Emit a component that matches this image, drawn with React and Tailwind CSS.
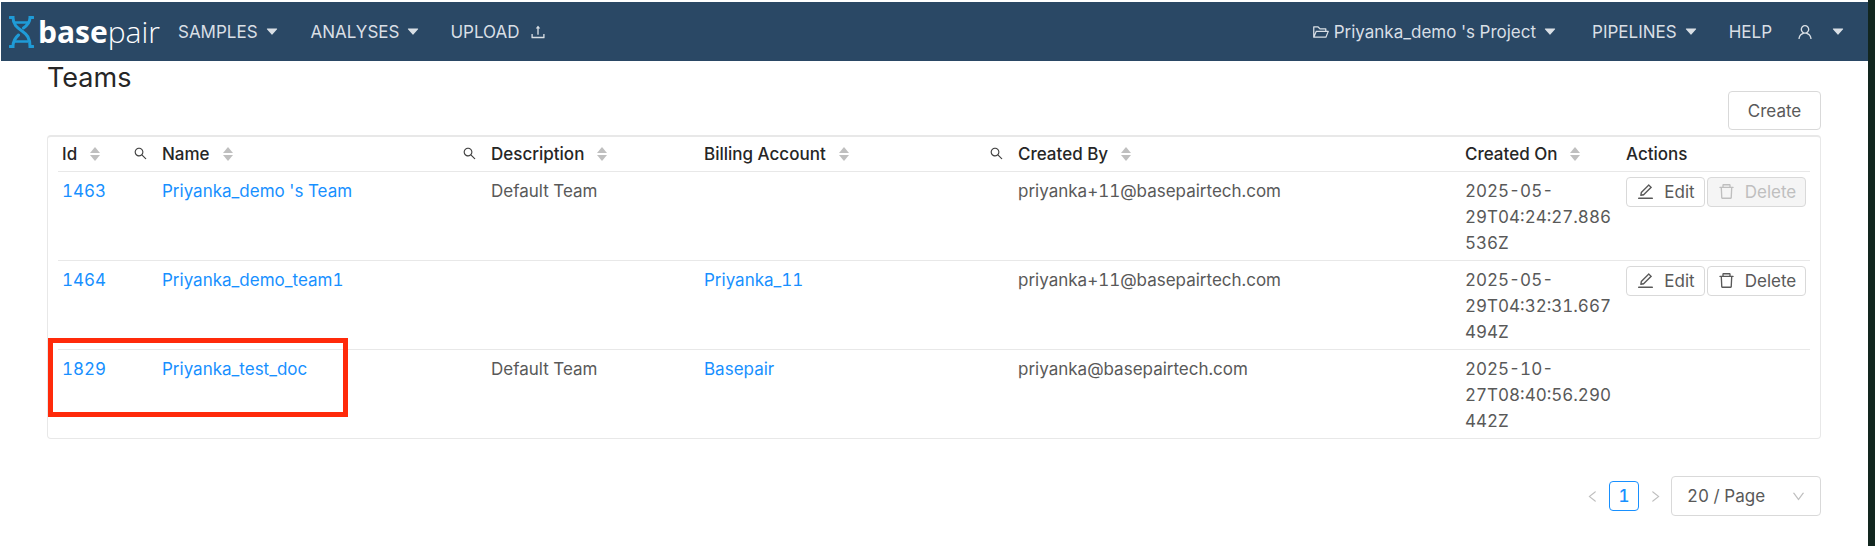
import {
  AiOutlineEdit,
  AiOutlineDelete,
  AiOutlineUpload,
  AiOutlineUser,
  AiOutlineFolderOpen,
  AiOutlineSearch,
  AiOutlineLeft,
  AiOutlineRight,
  AiOutlineDown,
} from "react-icons/ai";

const teams = [
  {
    id: 1463,
    name: "Priyanka_demo 's Team",
    description: "Default Team",
    billing: "",
    createdBy: "priyanka+11@basepairtech.com",
    createdOn: "2025-05-29T04:24:27.886536Z",
    deletable: false,
    actions: true,
  },
  {
    id: 1464,
    name: "Priyanka_demo_team1",
    description: "",
    billing: "Priyanka_11",
    createdBy: "priyanka+11@basepairtech.com",
    createdOn: "2025-05-29T04:32:31.667494Z",
    deletable: true,
    actions: true,
  },
  {
    id: 1829,
    name: "Priyanka_test_doc",
    description: "Default Team",
    billing: "Basepair",
    createdBy: "priyanka@basepairtech.com",
    createdOn: "2025-10-27T08:40:56.290442Z",
    actions: false,
  },
];

function Caret({ className = "" }) {
  return (
    <svg viewBox="0 0 12 8" className={`h-[7px] w-[12px] fill-current ${className}`}>
      <path d="M0.6 0.5h10.8a.5.5 0 0 1 .4.8L6.4 7.4a.5.5 0 0 1-.8 0L.2 1.3a.5.5 0 0 1 .4-.8z" />
    </svg>
  );
}

function SortCarets() {
  return (
    <span className="flex flex-col gap-[2px] text-[#bfbfbf]">
      <svg viewBox="0 0 10 6" className="h-[6px] w-[10px] fill-current">
        <path d="M5 0l5 6H0z" />
      </svg>
      <svg viewBox="0 0 10 6" className="h-[6px] w-[10px] fill-current">
        <path d="M0 0h10L5 6z" />
      </svg>
    </span>
  );
}

function Logo() {
  return (
    <div className="flex items-center">
      <svg viewBox="0 0 25 32" className="h-[32px] w-[25px] fill-none stroke-[#1f9bd7]" strokeWidth="3">
        <path d="M1 1.5h3c0 7 4 10 9 13.5 5 3.500 8 7 8 15.500h3" strokeLinecap="round" />
        <path d="M24 1.500h-3c0 5-3 8-6.500 10.500" strokeLinecap="round" />
        <path d="M9.500 19c-3 2.500-5.500 6-5.500 11.500h-3" strokeLinecap="round" />
        <path d="M6 6.500h13" strokeWidth="2.500" />
        <path d="M6 25.500h13" strokeWidth="2.500" />
      </svg>
      <span className="ml-[4px] font-['Open_Sans',sans-serif] text-[30px] leading-none text-white">
        <span className="font-bold">base</span>
        <span className="font-light">pair</span>
      </span>
    </div>
  );
}

function NavItem({ children, caret = true, className = "" }) {
  return (
    <span className={`flex items-center text-[17px] text-[#d9dfe5] ${className}`}>
      {children}
      {caret && <Caret className="ml-[8px]" />}
    </span>
  );
}

function Navbar() {
  return (
    <nav className="ml-px mt-[2px] flex h-[59px] items-center bg-[#2a4865] pl-[8px] pr-[24px]">
      <Logo />
      <NavItem className="ml-[18px]">SAMPLES</NavItem>
      <NavItem className="ml-[33px]">ANALYSES</NavItem>
      <NavItem caret={false} className="ml-[31px]">
        UPLOAD
        <AiOutlineUpload className="ml-[9px]" size={18} />
      </NavItem>
      <div className="ml-auto flex items-center">
        <NavItem>
          <AiOutlineFolderOpen className="mr-[4px]" size={18} />
          Priyanka_demo 's Project
        </NavItem>
        <NavItem className="ml-[36px]">PIPELINES</NavItem>
        <NavItem caret={false} className="ml-[32px]">
          HELP
        </NavItem>
        <NavItem caret={false} className="ml-[24px]">
          <AiOutlineUser size={18} />
          <Caret className="ml-[18px]" />
        </NavItem>
      </div>
    </nav>
  );
}

function HeaderCell({ label, sortable = true, search = false }) {
  return (
    <th className="px-[4px] text-left align-middle font-medium text-[#262626]">
      <div className="flex items-center justify-between">
        <span className="flex items-center gap-[13px]">
          {label}
          {sortable && <SortCarets />}
        </span>
        {search && <AiOutlineSearch className="mr-[6px] text-[#404040]" size={15} />}
      </div>
    </th>
  );
}

function ActionButton({ icon: Icon, label, disabled, className = "" }) {
  return (
    <button
      type="button"
      disabled={disabled}
      className={`flex h-[30px] items-center justify-center gap-[9px] rounded border border-[#d9d9d9] ${
        disabled ? "bg-[#f5f5f5] text-[#bfbfbf]" : "bg-white text-[#595959]"
      } ${className}`}
    >
      <Icon size={19} />
      {label}
    </button>
  );
}

function TeamsTable() {
  return (
    <div className="relative mt-[5px] rounded border border-t-2 border-[#e8e8e8] px-[10px]">
      <table className="w-full table-fixed border-collapse">
        <colgroup>
          <col className="w-[100px]" />
          <col className="w-[329px]" />
          <col className="w-[213px]" />
          <col className="w-[314px]" />
          <col className="w-[447px]" />
          <col className="w-[161px]" />
          <col className="w-[188px]" />
        </colgroup>
        <thead>
          <tr className="h-[34px]">
            <HeaderCell label="Id" search />
            <HeaderCell label="Name" search />
            <HeaderCell label="Description" />
            <HeaderCell label="Billing Account" search />
            <HeaderCell label="Created By" />
            <HeaderCell label="Created On" />
            <HeaderCell label="Actions" sortable={false} />
          </tr>
        </thead>
        <tbody>
          {teams.map((team) => (
            <tr key={team.id} className="h-[89px] border-t border-[#e8e8e8] align-top">
              <td className="px-[4px] pb-[4px] pt-[6px] text-[#1890ff]">{team.id}</td>
              <td className="px-[4px] pb-[4px] pt-[6px] text-[#1890ff]">{team.name}</td>
              <td className="px-[4px] pb-[4px] pt-[6px]">{team.description}</td>
              <td className="px-[4px] pb-[4px] pt-[6px] text-[#1890ff]">{team.billing}</td>
              <td className="px-[4px] pb-[4px] pt-[6px]">{team.createdBy}</td>
              <td className="px-[4px] pb-[4px] pt-[6px] [overflow-wrap:anywhere]">{team.createdOn}</td>
              <td className="px-[4px] pb-[4px] pt-[5px]">
                {team.actions && (
                  <div className="flex gap-[2px]">
                    <ActionButton icon={AiOutlineEdit} label="Edit" className="w-[79px]" />
                    <ActionButton
                      icon={AiOutlineDelete}
                      label="Delete"
                      disabled={!team.deletable}
                      className="w-[99px]"
                    />
                  </div>
                )}
              </td>
            </tr>
          ))}
        </tbody>
      </table>
      {/* annotation drawn over the last row */}
      <div className="pointer-events-none absolute left-0 top-[201px] h-[79px] w-[300px] border-[5px] border-[#ff2a0a]" />
    </div>
  );
}

function Pagination() {
  return (
    <div className="mt-[37px] flex items-center justify-end">
      <AiOutlineLeft className="text-[#bfbfbf]" size={15} />
      <span className="ml-[9px] flex h-[30px] w-[30px] items-center justify-center rounded border border-[#1890ff] font-medium text-[#1890ff]">
        1
      </span>
      <AiOutlineRight className="ml-[9px] text-[#bfbfbf]" size={15} />
      <div className="ml-[8px] flex h-[40px] w-[150px] items-center justify-between rounded border border-[#d9d9d9] pl-[15px] pr-[14px]">
        20 / Page
        <AiOutlineDown className="text-[#bfbfbf]" size={15} />
      </div>
    </div>
  );
}

export default function App() {
  return (
    <div className="flex h-[546px] overflow-hidden bg-white font-['Inter',sans-serif] text-[17px] leading-[26px] text-[#595959] [font-variant-numeric:tabular-nums]">
      <div className="min-w-0 flex-1">
        <Navbar />
        <main className="px-[47px]">
          <h1 className="h-[30px] text-[27px] font-normal leading-[34px] text-[#262626]">Teams</h1>
          <div className="flex justify-end">
            <button type="button" className="h-[39px] w-[93px] rounded border border-[#d9d9d9] bg-white">
              Create
            </button>
          </div>
          <TeamsTable />
          <Pagination />
        </main>
      </div>
      <div className="w-[7px] bg-[#12261f]" />
    </div>
  );
}
